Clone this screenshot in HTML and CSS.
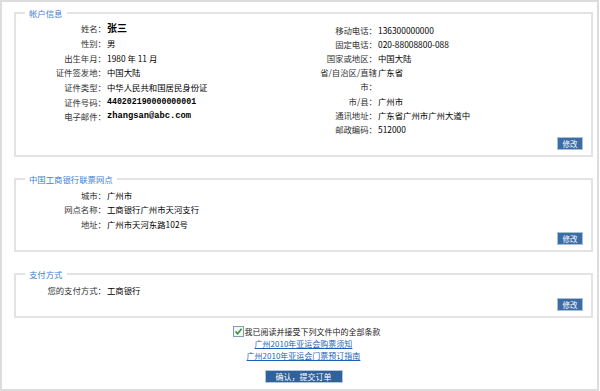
FILE: index.html
```html
<!DOCTYPE html>
<html lang="zh-CN">
<head>
  <meta charset="UTF-8">
  <title>确认订单</title>
  <link rel="stylesheet" href="styles.css">
</head>
<body>

  <div class="page">

    <fieldset class="box">
      <legend>帐户信息</legend>
      <div class="info">
        <div class="col col-left">
          <div class="row"><span class="label">姓名：</span><span class="value name">张三</span></div>
          <div class="row"><span class="label">性别：</span><span class="value">男</span></div>
          <div class="row"><span class="label">出生年月：</span><span class="value">1980 年 11 月</span></div>
          <div class="row"><span class="label">证件签发地：</span><span class="value">中国大陆</span></div>
          <div class="row"><span class="label">证件类型：</span><span class="value">中华人民共和国居民身份证</span></div>
          <div class="row"><span class="label">证件号码：</span><span class="value mono">440202190000000001</span></div>
          <div class="row"><span class="label">电子邮件：</span><span class="value mono email">zhangsan@abc.com</span></div>
        </div>
        <div class="col col-right">
          <div class="row"><span class="label">移动电话：</span><span class="value">136300000000</span></div>
          <div class="row"><span class="label">固定电话：</span><span class="value">020-88008800-088</span></div>
          <div class="row"><span class="label">国家或地区：</span><span class="value">中国大陆</span></div>
          <div class="row"><span class="label">省/自治区/直辖</span><span class="value">广东省</span></div>
          <div class="row"><span class="label">市：</span><span class="value"></span></div>
          <div class="row"><span class="label">市/县：</span><span class="value">广州市</span></div>
          <div class="row"><span class="label">通讯地址：</span><span class="value">广东省广州市广州大道中</span></div>
          <div class="row"><span class="label">邮政编码：</span><span class="value">512000</span></div>
        </div>
      </div>
      <div class="actions"><button class="btn-edit">修改</button></div>
    </fieldset>

    <fieldset class="box">
      <legend>中国工商银行联票网点</legend>
      <div class="col">
        <div class="row"><span class="label">城市：</span><span class="value">广州市</span></div>
        <div class="row"><span class="label">网点名称：</span><span class="value">工商银行广州市天河支行</span></div>
        <div class="row"><span class="label">地址：</span><span class="value">广州市天河东路102号</span></div>
      </div>
      <div class="actions"><button class="btn-edit">修改</button></div>
    </fieldset>

    <fieldset class="box">
      <legend>支付方式</legend>
      <div class="col">
        <div class="row"><span class="label">您的支付方式：</span><span class="value">工商银行</span></div>
      </div>
      <div class="actions"><button class="btn-edit">修改</button></div>
    </fieldset>

    <div class="agree">
      <div class="check-row">
        <span class="checkbox">
          <svg width="9" height="9" viewBox="0 0 9 9"><path d="M1.5 4.5 L3.6 6.8 L7.6 1.8" fill="none" stroke="#2f9a2f" stroke-width="1.6"/></svg>
        </span>我已阅读并接受下列文件中的全部条款
      </div>
      <a href="#">广州2010年亚运会购票须知</a>
      <a href="#">广州2010年亚运会门票预订指南</a>
      <div class="submit-row"><button class="btn-submit">确认，提交订单</button></div>
    </div>

  </div>

</body>
</html>
```

FILE: styles.css
```css
body {
  margin: 0;
  font-family: "Noto Sans CJK SC", "Noto Sans", sans-serif;
  font-size: 8.4px;
  color: #000;
  background: #fff;
}
.page {
  box-sizing: border-box;
  width: 599px;
  height: 391px;
  border: 2px solid #dcdcdc;
  padding: 5px 4px 0 12px;
}
.box {
  margin: 0 0 16px;
  padding: 2px 8px 5px 9px;
  border: 2px solid #e3e3e3;
  min-inline-size: 0;
}
.box legend {
  padding: 0 4px;
  height: 12px;
  line-height: 12px;
  color: #3b7fd6;
}
.info {
  display: flex;
}
.col-left {
  width: 275px;
}
.col-left .row {
  height: 14.7px;
}
.col-right {
  flex-grow: 1;
  padding-top: 2px;
}
.col-right .row {
  height: 14.1px;
}
.col-right .label {
  width: 77px;
}
.row {
  display: flex;
  align-items: center;
  height: 14.5px;
  line-height: 14px;
  white-space: nowrap;
}
.label {
  flex: none;
  width: 81px;
  text-align: right;
  color: #333;
  direction: rtl;
  unicode-bidi: plaintext;
}
.value {
  padding-left: 1px;
}
.name {
  font-weight: bold;
  font-size: 10px;
}
.mono {
  font-family: "Liberation Mono", monospace;
  font-weight: bold;
  font-size: 8.25px;
}
.email {
  font-size: 8.75px;
}
.actions {
  display: flex;
  justify-content: flex-end;
  margin-top: 1.5px;
}
.btn-edit {
  width: 26px;
  height: 13px;
  padding: 0;
  font-family: inherit;
  font-size: 7.5px;
  line-height: 11px;
  color: #fff;
  background: #3a6ca6;
  border: 1px solid #a9bfd8;
  cursor: pointer;
}
.agree {
  margin-top: -9px;
  text-align: center;
  font-size: 8px;
}
.check-row {
  display: flex;
  justify-content: center;
  align-items: center;
  height: 13px;
  line-height: 12px;
  color: #222;
  padding-left: 6px;
}
.checkbox {
  flex: none;
  box-sizing: border-box;
  width: 11px;
  height: 11px;
  margin-right: 1px;
  padding: 0;
  border: 1px solid #7f9db9;
  background: #f4f7fa;
  line-height: 0;
}
.agree a {
  display: block;
  height: 11.5px;
  line-height: 11.5px;
  color: #1f5fb8;
  text-decoration: underline;
}
.submit-row {
  display: flex;
  justify-content: center;
  margin-top: 8.5px;
}
.btn-submit {
  width: 78px;
  height: 13px;
  padding: 0;
  font-family: inherit;
  font-size: 8px;
  line-height: 11px;
  color: #fff;
  background: #2f629a;
  border: 1px solid #b3c6db;
  cursor: pointer;
}
```
